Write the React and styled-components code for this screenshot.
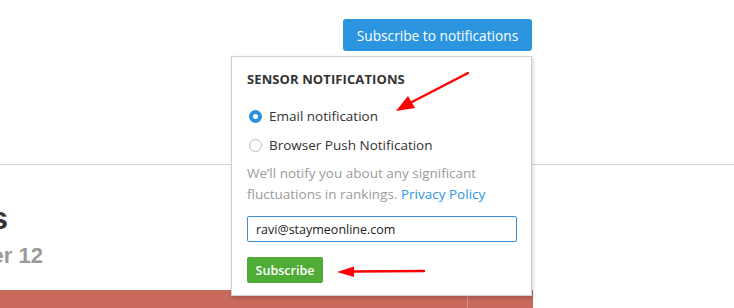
import React, { useState } from 'react'
import styled, { createGlobalStyle } from 'styled-components'

const GlobalStyle = createGlobalStyle`
  html, body {
    margin: 0;
    padding: 0;
    background: #fff;
  }
  body {
    font-family: "Open Sans", "Noto Sans", sans-serif;
  }
`

const Page = styled.div`
  position: relative;
  width: 734px;
  height: 308px;
  overflow: hidden;
  background: #fff;
`

const Header = styled.div`
  height: 145px;
  border-bottom: 1px solid #d4d4d4;
  display: flex;
  justify-content: flex-end;
  padding: 19px 202px 0 0;
`

const Dropdown = styled.div`
  position: relative;
  height: 32px;
`

const PrimaryButton = styled.button`
  height: 32px;
  width: 189px;
  border: none;
  border-radius: 3px;
  background: #2c95df;
  color: #fff;
  font-family: inherit;
  font-size: 13.7px;
  padding: 0;
  cursor: pointer;
`

const Popup = styled.div`
  position: absolute;
  top: 37px;
  right: 0;
  width: 301px;
  box-sizing: border-box;
  background: #fff;
  border: 1px solid #d0d0d0;
  box-shadow: 1px 2px 4px rgba(0, 0, 0, 0.18);
  padding: 12px 14px 12px 15px;
  display: flex;
  flex-direction: column;
  z-index: 2;
`

const PopupTitle = styled.div`
  font-size: 13px;
  font-weight: 700;
  color: #333;
  line-height: 20px;
  letter-spacing: 0.1px;
  margin-bottom: 17px;
`

const RadioRow = styled.label`
  display: flex;
  align-items: center;
  gap: 7px;
  height: 20px;
  margin-bottom: ${p => p.$gap || 0}px;
  font-size: 13.5px;
  color: #333;
  cursor: pointer;
`

const RadioDot = styled.span`
  width: 13px;
  height: 13px;
  box-sizing: border-box;
  border-radius: 50%;
  margin-left: 2px;
  border: ${p => (p.$checked ? '4px solid #2c8fdc' : '1px solid #b8b8b8')};
  background: #fff;
`

const Description = styled.p`
  margin: 8px 0 0 0;
  font-size: 13.5px;
  line-height: 21px;
  color: #9b9b9b;
`

const Link = styled.a`
  color: #2c95df;
  text-decoration: none;
`

const EmailInput = styled.input`
  margin-top: 11px;
  height: 26px;
  width: 270px;
  box-sizing: border-box;
  border: 1px solid #3b8ed6;
  border-radius: 2px;
  padding: 0 8px;
  font-family: inherit;
  font-size: 12.5px;
  color: #222;
  outline: none;
`

const SubmitButton = styled.button`
  margin-top: 15px;
  align-self: flex-start;
  width: 76px;
  height: 26px;
  border: none;
  border-radius: 2px;
  background: #4fac36;
  color: #fff;
  font-family: inherit;
  font-size: 12.5px;
  font-weight: 600;
  padding: 0;
  cursor: pointer;
`

const Content = styled.div`
  display: flex;
  flex-direction: column;
  padding-top: 34px;
`

const TitleBlock = styled.div`
  margin-left: -257px;
  width: 300px;
  text-align: right;
  font-family: "Liberation Sans", Arial, sans-serif;
  font-weight: 700;
`

const Heading = styled.h1`
  margin: 0 35px 0 0;
  font-size: 32px;
  line-height: 38px;
  color: #333;
`

const SubHeading = styled.div`
  margin-top: 6px;
  font-size: 22px;
  line-height: 26px;
  color: #9a9a9a;
`

const Band = styled.div`
  margin-top: 21px;
  width: 533px;
  height: 20px;
  display: grid;
  grid-template-columns: 467px 1fr;
  background: #c8695c;
`

const BandCell = styled.div`
  & + & {
    border-left: 1px solid #d99286;
  }
`

const Arrows = styled.svg`
  position: absolute;
  left: 0;
  top: 0;
  pointer-events: none;
  z-index: 3;
`

export default function App() {
  const [mode, setMode] = useState('email')
  return (
    <Page>
      <GlobalStyle />
      <Header>
        <Dropdown>
          <PrimaryButton>Subscribe to notifications</PrimaryButton>
          <Popup>
            <PopupTitle>SENSOR NOTIFICATIONS</PopupTitle>
            <RadioRow $gap={9} onClick={() => setMode('email')}>
              <RadioDot $checked={mode === 'email'} />
              Email notification
            </RadioRow>
            <RadioRow onClick={() => setMode('push')}>
              <RadioDot $checked={mode === 'push'} />
              Browser Push Notification
            </RadioRow>
            <Description>
              We’ll notify you about any significant
              <br />
              fluctuations in rankings. <Link href="#">Privacy Policy</Link>
            </Description>
            <EmailInput defaultValue="ravi@staymeonline.com" />
            <SubmitButton>Subscribe</SubmitButton>
          </Popup>
        </Dropdown>
      </Header>
      <Content>
        <TitleBlock>
          <Heading>Sensor Rankings</Heading>
          <SubHeading>December 12</SubHeading>
        </TitleBlock>
        <Band>
          <BandCell />
          <BandCell />
        </Band>
      </Content>
      <Arrows width="734" height="308" viewBox="0 0 734 308">
        <g fill="#f00" stroke="#f00">
          <line x1="468" y1="73" x2="410" y2="103" strokeWidth="2.5" strokeLinecap="round" />
          <polygon points="396,111 408,96 415,108" stroke="none" />
          <line x1="424" y1="271" x2="352" y2="271.5" strokeWidth="2.5" strokeLinecap="round" />
          <polygon points="337,272 354,266.5 354,277" stroke="none" />
        </g>
      </Arrows>
    </Page>
  )
}
